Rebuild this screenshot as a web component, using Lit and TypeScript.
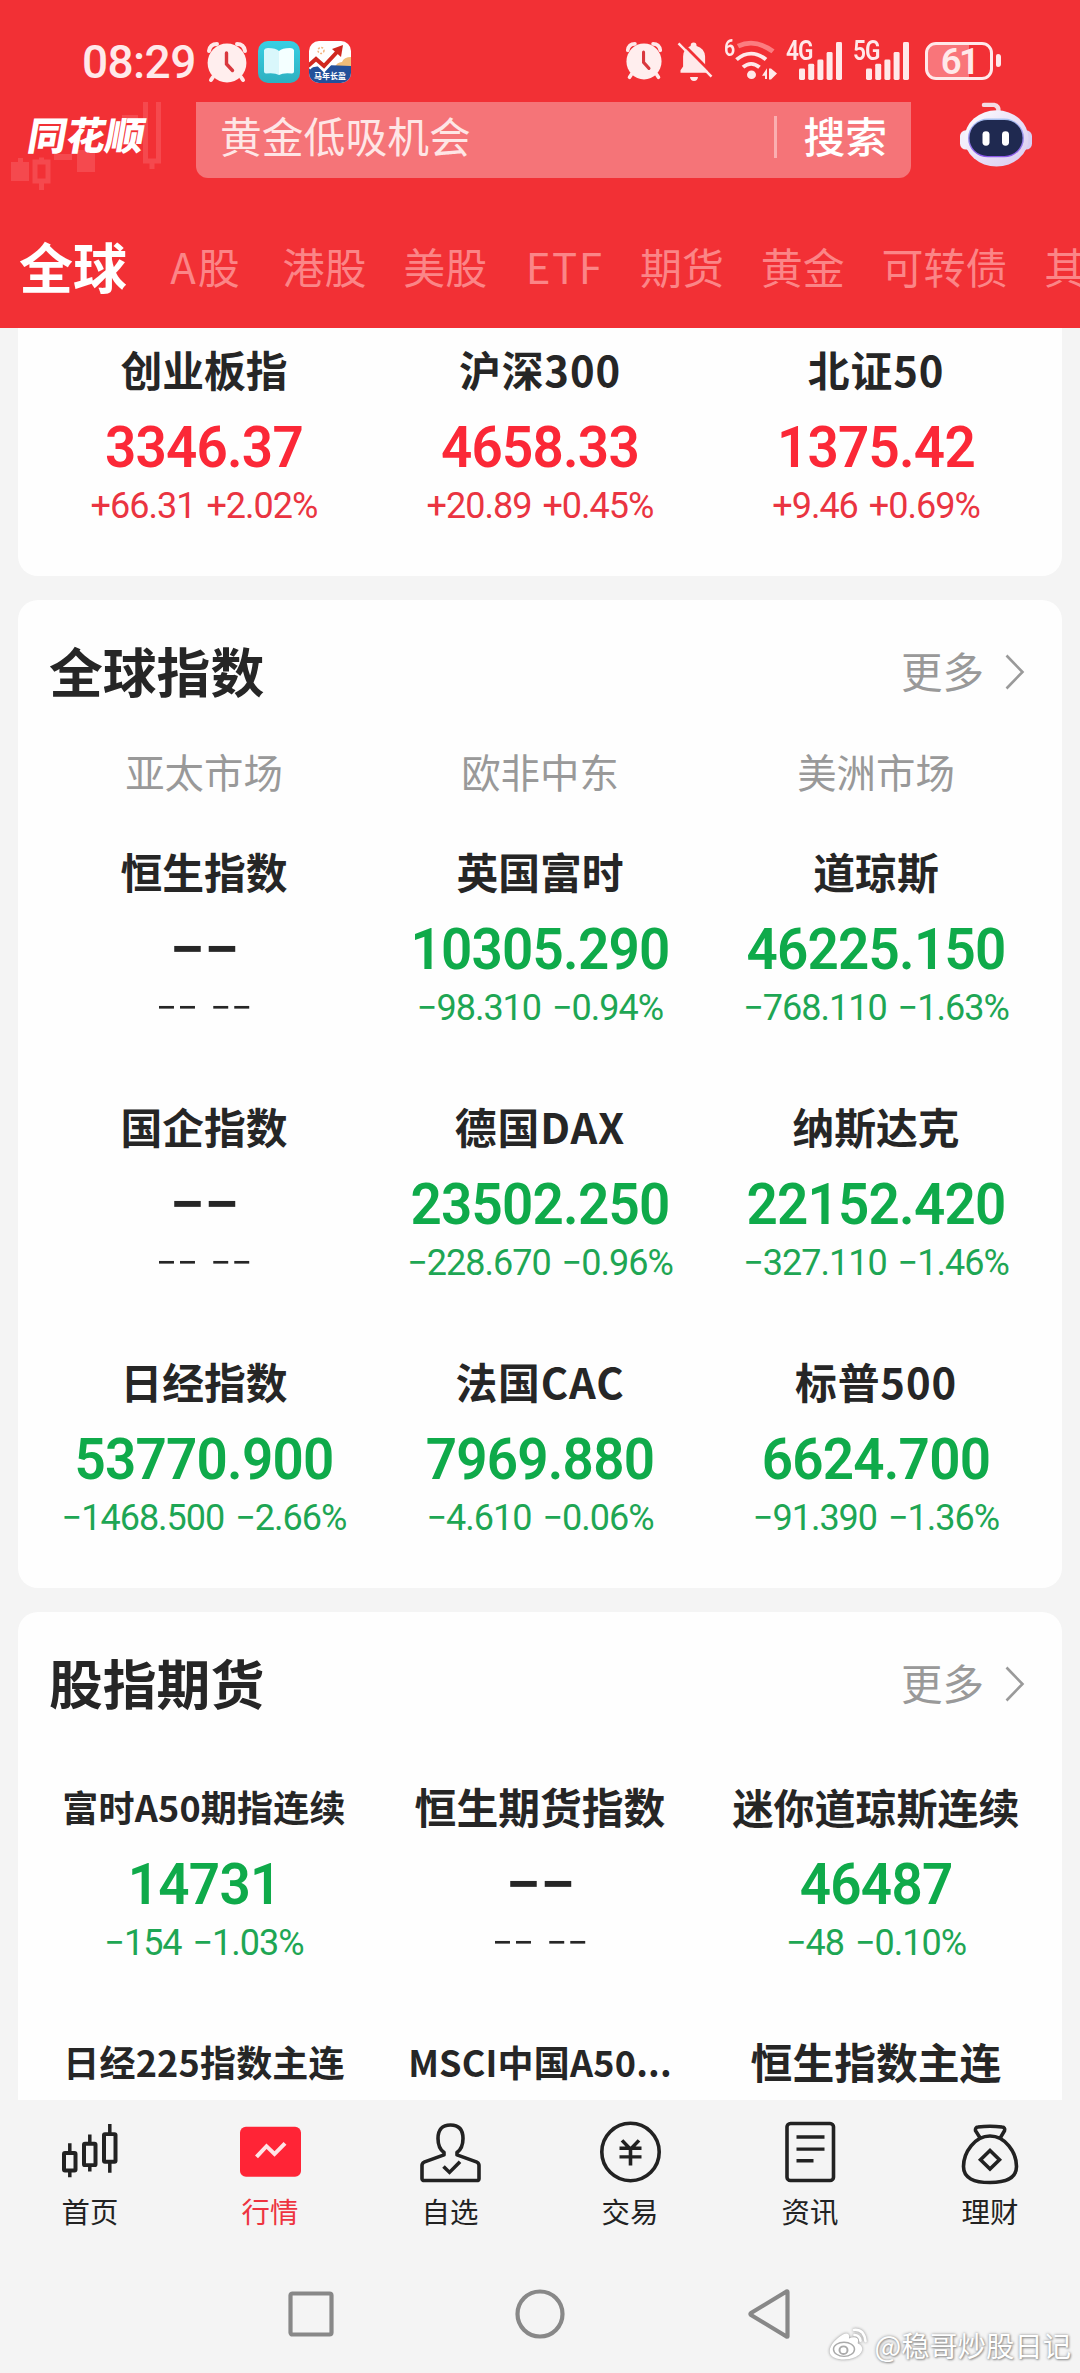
import { LitElement, html, css, svg, nothing } from "lit";
import { customElement, property } from "lit/decorators.js";
import { classMap } from "lit/directives/class-map.js";

type Trend = "up" | "down" | "none";

interface Quote {
  name: string;
  value?: string;
  change?: string;
  trend: Trend;
  size?: "sm" | "md";
}

const up = (name: string, value: string, change: string): Quote => ({ name, value, change, trend: "up" });
const down = (name: string, value: string, change: string, size?: "sm" | "md"): Quote => ({
  name,
  value,
  change,
  trend: "down",
  size,
});
const none = (name: string, size?: "sm" | "md"): Quote => ({
  name,
  value: "−−",
  change: "−− −−",
  trend: "none",
  size,
});

const DOMESTIC: Quote[] = [
  up("创业板指", "3346.37", "+66.31 +2.02%"),
  up("沪深300", "4658.33", "+20.89 +0.45%"),
  up("北证50", "1375.42", "+9.46 +0.69%"),
];

const GLOBAL: Quote[] = [
  none("恒生指数"),
  down("英国富时", "10305.290", "−98.310 −0.94%"),
  down("道琼斯", "46225.150", "−768.110 −1.63%"),
  none("国企指数"),
  down("德国DAX", "23502.250", "−228.670 −0.96%"),
  down("纳斯达克", "22152.420", "−327.110 −1.46%"),
  down("日经指数", "53770.900", "−1468.500 −2.66%"),
  down("法国CAC", "7969.880", "−4.610 −0.06%"),
  down("标普500", "6624.700", "−91.390 −1.36%"),
];

const FUTURES: Quote[] = [
  down("富时A50期指连续", "14731", "−154 −1.03%", "sm"),
  none("恒生期货指数"),
  down("迷你道琼斯连续", "46487", "−48 −0.10%", "md"),
  { name: "日经225指数主连", trend: "none", size: "sm" },
  { name: "MSCI中国A50...", trend: "none", size: "sm" },
  { name: "恒生指数主连", trend: "none" },
];

const TABS = ["全球", "A股", "港股", "美股", "ETF", "期货", "黄金", "可转债", "其"];

const alarmIcon = (w: number, h: number) => html`<svg width=${w} height=${h} viewBox="0 0 42 42" preserveAspectRatio="none">
  <g fill="none" stroke="#ffe9ea" stroke-linecap="round">
    <path stroke-width="4" d="M3 10Q4 3 11 3M39 10Q38 3 31 3M7 36l-2 3M35 36l2 3" />
  </g>
  <circle cx="21" cy="22" r="19.4" fill="#ffeeee" />
  <path d="M20.500 12v11l6 6.500" fill="none" stroke="#d9383e" stroke-width="3.400" stroke-linecap="round" />
</svg>`;

const bookIcon = html`<svg width="42" height="42" viewBox="0 0 42 42">
  <defs>
    <linearGradient id="bk" x1="0" y1="0" x2="0" y2="1">
      <stop offset="0" stop-color="#38cfe4" />
      <stop offset="1" stop-color="#2db0c0" />
    </linearGradient>
  </defs>
  <rect width="42" height="42" rx="10" fill="url(#bk)" />
  <path d="M6 9q1-2 4-2 8 0 11 3v24q-4-2.500-13-1.500-2 0-2-2z" fill="#d9f7fb" />
  <path d="M36 9q-1-2-4-2-8 0-11 3v24q4-2.500 13-1.500 2 0 2-2z" fill="#f4ffff" />
</svg>`;

const stockAppIcon = html`<svg width="42" height="42" viewBox="0 0 42 42">
  <defs><clipPath id="sa"><rect width="42" height="42" rx="10" /></clipPath></defs>
  <g clip-path="url(#sa)">
    <rect width="42" height="42" fill="#fff" />
    <circle cx="12" cy="9.500" r="3" fill="none" stroke="#f3b27c" stroke-width="1.500" stroke-dasharray="2 1.500" />
    <path d="M25 27q3-6 8-6 2-5 9-5v12z" fill="#f0bd78" />
    <path d="M0 27l16-3 26 1v17H0z" fill="#23509a" />
    <path d="M-1 26l8-7 8 8 13-14" fill="none" stroke="#fff" stroke-width="6.500" />
    <path d="M-1 25l8-7 8 7 14-15" fill="none" stroke="#d1281f" stroke-width="4" />
    <path d="M34 4l-11 4 9 8z" fill="#d1281f" />
    <text x="21" y="38" class="micro" text-anchor="middle">马年长盈</text>
  </g>
</svg>`;

const bellOffIcon = html`<svg width="36" height="41" viewBox="0 0 36 42" preserveAspectRatio="none">
  <path
    d="M3.500 32.500v-2.500l2.600-4V16a11.500 11.500 0 0 1 7.500-11q0-3.500 3-3.500t3 3.500a11.500 11.500 0 0 1 8.500 11v10l3 4v2.500z"
    fill="#ffe9ea"
  />
  <path d="M13 37h8q-.500 4-4 4t-4-4z" fill="#ffe9ea" />
  <path d="M3 0L37 35" stroke="#f23035" stroke-width="3" />
  <path d="M1.500 2.500L34.500 36.500" stroke="#ffe9ea" stroke-width="2.400" />
</svg>`;

const wifiIcon = html`<svg width="42" height="40" viewBox="0 0 42 42" preserveAspectRatio="none">
  <g fill="none" stroke="#ffe9ea" stroke-width="4">
    <path d="M3 5.500Q20 -3 38 11" stroke="#fb7d80" stroke-width="5" />
    <path d="M1.500 19.500Q16 7 31 19.500" />
    <path d="M8 27.500q8-7 16.500 0" />
  </g>
  <circle cx="16.500" cy="35.500" r="4.500" fill="#ffe9ea" />
  <path d="M27 36.500l5-8v11.500h-2v-3.500zM34 29v11.500h2V29zM36 40.500V29l6 5z" fill="#ffe9ea" />
</svg>`;

const signalIcon = html`<svg width="44" height="38" viewBox="0 0 44 40" preserveAspectRatio="none">
  <g fill="#ffe9ea">
    <rect x="0" y="28" width="6" height="12" rx="1.500" />
    <rect x="9.200" y="23" width="6" height="17" rx="1.500" />
    <rect x="18.400" y="18.500" width="6" height="21.500" rx="1.500" />
    <rect x="27.600" y="10.500" width="6" height="29.500" rx="1.500" />
    <rect x="37" y="0" width="6" height="40" rx="1.500" />
  </g>
</svg>`;

const robotIcon = html`<svg width="76" height="68" viewBox="0 0 76 70" preserveAspectRatio="none">
  <defs>
    <linearGradient id="rb" x1="0" y1="0" x2="1" y2="1">
      <stop offset="0" stop-color="#ffffff" />
      <stop offset=".6" stop-color="#e6dcf6" />
      <stop offset="1" stop-color="#d9ccef" />
    </linearGradient>
    <linearGradient id="rv" x1="0" y1="0" x2="0" y2="1">
      <stop offset="0" stop-color="#a9c3f0" />
      <stop offset="1" stop-color="#8a55e8" />
    </linearGradient>
  </defs>
  <path d="M25 3h10q5 1 4.500 7" fill="none" stroke="#f4dbe4" stroke-width="4.500" stroke-linecap="round" />
  <rect x="1" y="29" width="14" height="20" rx="6" fill="#f2eefb" />
  <rect x="60" y="29" width="13" height="20" rx="6" fill="#d8cff3" />
  <ellipse cx="37.500" cy="37.500" rx="32" ry="29" fill="url(#rb)" />
  <rect x="9" y="17" width="56" height="40" rx="20" fill="url(#rv)" />
  <rect x="10.500" y="18.500" width="53" height="37" rx="18" fill="#1f2950" />
  <rect x="23.500" y="30" width="7" height="15" rx="3.500" fill="#fff" />
  <rect x="43" y="30" width="7" height="15" rx="3.500" fill="#fff" />
</svg>`;

const chevron = html`<svg class="chev" width="22" height="38" viewBox="0 0 22 38">
  <path d="M2.500 2.500L18.500 19 2.500 35.500" fill="none" stroke="#9a9a9a" stroke-width="2.600" />
</svg>`;

const NAV = [
  {
    label: "首页",
    icon: svg`<g fill="none" stroke="#222" stroke-width="4"><rect x="4" y="32" width="11.500" height="18" rx="1"/><rect x="24" y="22.500" width="11.500" height="22" rx="1"/><rect x="44" y="12.500" width="11.500" height="28.500" rx="1"/><path d="M9.800 22v10M9.800 50v7M29.800 13v9M29.800 45v6M49.800 2v10M49.800 41v11.500" stroke-width="3.500"/></g>`,
  },
  {
    label: "行情",
    active: true,
    icon: svg`<rect x="0" y="5" width="61" height="51.500" rx="6" fill="#ff2436"/><path d="M16.500 36L26.500 25 34.500 33 45 22" fill="none" stroke="#ffe4e6" stroke-width="4"/>`,
  },
  {
    label: "自选",
    icon: svg`<g fill="none" stroke="#222" stroke-width="3.600" stroke-linejoin="round"><path d="M24 31.500Q18 27 18 17 18 3 30.500 3 43 3 43 17 43 27 37 31.500V34L57 41.500Q59 42.500 59 45V58.500Q59 60.500 56.500 60.500H4.500Q2 60.500 2 58.500V45Q2 42.500 4 41.500L24 34Z"/><path d="M23.500 46L29.500 52 40 41" stroke-linejoin="miter"/></g>`,
  },
  {
    label: "交易",
    icon: svg`<g fill="none" stroke="#222" stroke-width="3.600"><ellipse cx="30.500" cy="31" rx="28.700" ry="29.600"/><path d="M22 19L30.500 28 39 19M19.500 27H41.500M19.500 36H41.500M30.500 27V45"/></g>`,
  },
  {
    label: "资讯",
    icon: svg`<g fill="none" stroke="#222" stroke-width="3.600"><rect x="7" y="1.500" width="46.500" height="59" rx="3.500"/><path d="M16.500 15.500H44.500M16.500 28H44.500M16.500 40H33.500"/></g>`,
  },
  {
    label: "理财",
    icon: svg`<g fill="none" stroke="#222" stroke-width="3.600"><path d="M20.500 17L15.500 9Q15 5.500 18 5.200 30 3.500 42 5.200 45.500 5.500 44.500 9L40 17"/><path d="M30 14.500C45 14.500 56.500 31 56.500 46 56.500 58 46 62.500 30 62.500S3.500 58 3.500 46C3.500 31 15 14.500 30 14.500Z"/><path d="M30 29.500L39.500 39 30 48.500 20.500 39Z"/></g>`,
  },
];

@customElement("quote-cell")
class QuoteCell extends LitElement {
  @property({ attribute: false }) quote!: Quote;

  static styles = css`
    :host {
      display: flex;
      flex-direction: column;
      align-items: center;
      white-space: nowrap;
      color: #262626;
    }
    .name {
      font: 700 41.8px/60px "Noto Sans CJK SC", sans-serif;
      height: 60px;
      margin-top: -2px;
      margin-bottom: 2px;
    }
    .name.mixed {
      letter-spacing: 0.9px;
    }
    .name.sm {
      font-size: 36px;
      letter-spacing: 0.2px;
    }
    .name.md {
      font-size: 41px;
    }
    .value {
      font: 600 57.5px/94px Roboto, sans-serif;
      letter-spacing: -0.8px;
      transform: scaleX(0.953);
    }
    .value.flat {
      transform: scaleX(1.1);
    }
    .change {
      font: 450 36px/26px Roboto, sans-serif;
      letter-spacing: -1px;
      word-spacing: 3px;
      margin-top: -2px;
    }
    .change.flat {
      letter-spacing: 0;
      transform: scaleX(1.02);
    }
    .up {
      color: #fb2837;
    }
    .change.up {
      color: #ea3441;
    }
    .down {
      color: #0faa4a;
    }
    .change.down {
      color: #1ea654;
    }
  `;

  render() {
    const { name, value, change, trend, size } = this.quote;
    const tone = { up: trend === "up", down: trend === "down", flat: trend === "none" };
    const nameClass = { name: true, mixed: /[A-Z0-9]/.test(name), sm: size === "sm", md: size === "md" };
    return html`
      <div class=${classMap(nameClass)}>${name}</div>
      ${value ? html`<div class=${classMap({ value: true, ...tone })}>${value}</div>` : nothing}
      ${change ? html`<div class=${classMap({ change: true, ...tone })}>${change}</div>` : nothing}
    `;
  }
}

@customElement("app-root")
class AppRoot extends LitElement {
  static styles = css`
    :host {
      display: flex;
      flex-direction: column;
      position: relative;
      width: 1080px;
      height: 2373px;
      overflow: hidden;
      background: #f4f4f4;
      font-family: "Noto Sans CJK SC", sans-serif;
      white-space: nowrap;
    }
    svg {
      display: block;
      flex: none;
      overflow: visible;
    }
    .header {
      flex: none;
      height: 328px;
      background: #f23035;
      overflow: hidden;
    }
    .status {
      display: flex;
      align-items: flex-start;
      height: 61px;
      padding: 41px 79px 0 82px;
      color: #ffe9ea;
      font-family: Roboto, sans-serif;
    }
    .time {
      width: 124px;
      font-size: 46px;
      font-weight: 500;
      line-height: 42px;
      letter-spacing: -0.6px;
    }
    .apps {
      display: flex;
      gap: 9.500px;
      flex: 1;
    }
    .micro {
      font: 700 8px "Noto Sans CJK SC", sans-serif;
      fill: #fff;
    }
    .bell {
      margin-left: 14px;
    }
    .six {
      margin-left: 11px;
      width: 11px;
      font-size: 23px;
      font-weight: 600;
      line-height: 16px;
      transform: scaleX(0.85);
      transform-origin: left;
    }
    .gen {
      font-size: 27px;
      font-weight: 600;
      line-height: 21px;
      letter-spacing: -1px;
      width: 13px;
      margin-left: 10px;
      transform: scaleX(0.84);
      transform-origin: left;
    }
    .gen.first {
      margin-left: 9px;
    }
    .signal {
      margin-top: 1px;
    }
    .battery {
      box-sizing: border-box;
      margin: 1px 0 0 15px;
      width: 68px;
      height: 38px;
      border: 3.5px solid #ffe9ea;
      border-radius: 11px;
      background: linear-gradient(90deg, #f9757a 66%, transparent 66%);
      font-size: 36.5px;
      font-weight: 600;
      line-height: 33px;
      text-align: center;
      letter-spacing: -2.5px;
    }
    .nub {
      width: 5px;
      height: 13px;
      margin: 13px 0 0 3px;
      border-radius: 2px 3px 3px 2px;
      background: #ffe9ea;
    }
    .searchrow {
      display: flex;
      height: 103px;
    }
    .brand {
      position: relative;
      width: 196px;
      flex: none;
    }
    .candles {
      position: absolute;
      left: 0;
      top: 0;
    }
    .logo {
      position: relative;
      margin: 12px 0 0 29px;
      width: 120px;
      font-size: 38.8px;
      font-weight: 900;
      line-height: 38px;
      color: #fff;
      transform: skewX(-10deg);
    }
    .search {
      display: flex;
      align-items: center;
      box-sizing: border-box;
      width: 715px;
      height: 76px;
      padding: 0 24px 10px 24px;
      border-radius: 0 0 12px 12px;
      background: #f57478;
      font-size: 41.8px;
      line-height: 64px;
      color: #fee6e6;
    }
    .query {
      flex: 1;
    }
    .bar {
      width: 3px;
      height: 42px;
      margin: 3px 26px 0 0;
      background: #fbaeb0;
    }
    .go {
      color: #fff;
      font-weight: 500;
    }
    .robot {
      margin-left: 48px;
    }
    .tabs {
      display: flex;
      align-items: center;
      height: 112px;
      padding: 5px 0 0 19px;
      font-size: 42px;
      color: #fb8587;
      gap: 36.700px;
    }
    .tab {
      flex: none;
      line-height: 60px;
    }
    .tab.on {
      font-size: 54px;
      font-weight: 700;
      color: #fff;
      margin-right: 6.5px;
    }
    .tab.mixed {
      letter-spacing: 2px;
      margin-right: 4px;
    }
    .tab.latin {
      letter-spacing: 1.5px;
      padding-left: 2px;
    }
    .feed {
      flex: none;
      height: 1772px;
      overflow: hidden;
      display: flex;
      flex-direction: column;
      gap: 24px;
      padding: 0 18px;
      box-sizing: border-box;
    }
    .card {
      flex: none;
      box-sizing: border-box;
      background: #fefefe;
      border-radius: 20px;
    }
    .card.cut {
      border-radius: 0 0 20px 20px;
      padding: 13px 0 57px;
    }
    .card.full {
      padding-bottom: 57px;
    }
    .head {
      display: flex;
      align-items: center;
      height: 140px;
      padding: 0 36px 4px 31px;
    }
    .title {
      flex: 1;
      font-size: 53.8px;
      font-weight: 700;
      line-height: 80px;
      color: #262626;
    }
    .more {
      font-size: 41.5px;
      line-height: 60px;
      color: #999;
      margin-right: 20px;
    }
    .chev {
      margin-top: 4px;
    }
    .grid {
      display: grid;
      grid-template-columns: repeat(3, 336px);
      row-gap: 77px;
      padding: 0 18px;
    }
    .regions {
      margin: -2px 0 43px;
      font-size: 39.4px;
      line-height: 58px;
      text-align: center;
      color: #999;
    }
    .grid.fut {
      margin-top: 22px;
    }
    .nav {
      flex: none;
      display: grid;
      grid-template-columns: repeat(6, 180px);
      height: 163px;
      padding-top: 22px;
      box-sizing: border-box;
    }
    .item {
      display: flex;
      flex-direction: column;
      align-items: center;
      font-size: 28.4px;
      line-height: 40px;
      gap: 7px;
      color: #222;
    }
    .item.on {
      color: #ee3340;
    }
    .system {
      flex: none;
      display: flex;
      align-items: center;
      height: 101px;
      padding-left: 286px;
    }
    .mark {
      position: absolute;
      right: 9px;
      bottom: 8px;
      display: flex;
      align-items: center;
      gap: 5px;
      height: 40px;
      font-size: 28.3px;
      line-height: 40px;
      color: #fff;
      text-shadow: 0 0 3px #888, 1px 1px 2px #999;
    }
    .weibo {
      filter: drop-shadow(0 0 1.5px #888);
    }
  `;

  private section(quotes: Quote[], extra = "") {
    return html`<div class="grid ${extra}">${quotes.map((q) => html`<quote-cell .quote=${q}></quote-cell>`)}</div>`;
  }

  private head(title: string) {
    return html`<div class="head">
      <div class="title">${title}</div>
      <div class="more">更多</div>
      ${chevron}
    </div>`;
  }

  render() {
    return html`
      <div class="header">
        <div class="status">
          <div class="time">08:29</div>
          <div class="apps">${alarmIcon(42, 42)}${bookIcon}${stockAppIcon}</div>
          ${alarmIcon(38, 39)}
          <div class="bell">${bellOffIcon}</div>
          <div class="six">6</div>
          ${wifiIcon}
          <div class="gen first">4G</div>
          <div class="signal">${signalIcon}</div>
          <div class="gen">5G</div>
          <div class="signal">${signalIcon}</div>
          <div class="battery">61</div>
          <div class="nub"></div>
        </div>
        <div class="searchrow">
          <div class="brand">
            <svg class="candles" width="180" height="100" viewBox="0 0 180 100">
              <g fill="#f5494e">
                <rect x="11" y="60" width="18" height="19" /><rect x="18" y="56" width="5" height="5" />
                <rect x="77" y="48" width="18" height="22" />
                <rect x="54" y="52" width="18" height="6" />
              </g>
              <g fill="none" stroke="#f5494e">
                <rect x="35" y="60" width="13" height="19" stroke-width="5" />
                <path d="M41.500 55.500v3M41.500 81v7M152 61v6" stroke-width="5" />
                <path d="M145.500 0V59H158.500V0" stroke-width="5" />
                <path d="M122 15.500h16" stroke-width="5" />
              </g>
            </svg>
            <div class="logo">同花顺</div>
          </div>
          <div class="search">
            <div class="query">黄金低吸机会</div>
            <div class="bar"></div>
            <div class="go">搜索</div>
          </div>
          <div class="robot">${robotIcon}</div>
        </div>
        <div class="tabs">
          ${TABS.map(
            (t, i) =>
              html`<div class=${classMap({ tab: true, on: i === 0, mixed: t === "A股", latin: t === "ETF" })}>${t}</div>`,
          )}
        </div>
      </div>

      <div class="feed">
        <div class="card cut">${this.section(DOMESTIC)}</div>
        <div class="card full">
          ${this.head("全球指数")}
          <div class="grid regions">
            <div>亚太市场</div>
            <div>欧非中东</div>
            <div>美洲市场</div>
          </div>
          ${this.section(GLOBAL)}
        </div>
        <div class="card full">${this.head("股指期货")}${this.section(FUTURES, "fut")}</div>
      </div>

      <div class="nav">
        ${NAV.map(
          (n) => html`<div class=${classMap({ item: true, on: !!n.active })}>
            <svg width="61" height="62" viewBox="0 0 61 64" preserveAspectRatio="none">${n.icon}</svg>
            <div>${n.label}</div>
          </div>`,
        )}
      </div>

      <div class="system">
        <svg width="510" height="60" viewBox="0 0 510 60">
          <g fill="none" stroke="#888" stroke-width="4.200" stroke-linejoin="round">
            <rect x="4.500" y="9.500" width="41" height="41" rx="2" />
            <circle cx="254" cy="30" r="22.500" />
            <path d="M501.500 8V52.500Q501.500 53 500.500 52.500L465 31Q464 30 465 29L500.500 7.500Q501.500 7 501.500 8Z" />
          </g>
        </svg>
      </div>

      <div class="mark">
        <svg class="weibo" width="40" height="34" viewBox="0 0 40 36" preserveAspectRatio="none">
          <path
            d="M14 7c3-2 7-2 6 4 4-2 10-2 9 3 0 2-1 2 1 3 6 4 3 11-4 14-9 4-22 3-25-4C-1 20 7 11 14 7z"
            fill="#fff"
          />
          <ellipse cx="15" cy="22.500" rx="10.500" ry="7.500" fill="none" stroke="#aaa" stroke-width="1.500" />
          <circle cx="14.500" cy="23.500" r="4" fill="none" stroke="#aaa" stroke-width="2" />
          <path d="M25 2q10-1 11.500 12M25.500 7.500q5 0 6 6" fill="none" stroke="#fff" stroke-width="2.600" stroke-linecap="round" />
        </svg>
        <span>@稳哥炒股日记</span>
      </div>
    `;
  }
}
